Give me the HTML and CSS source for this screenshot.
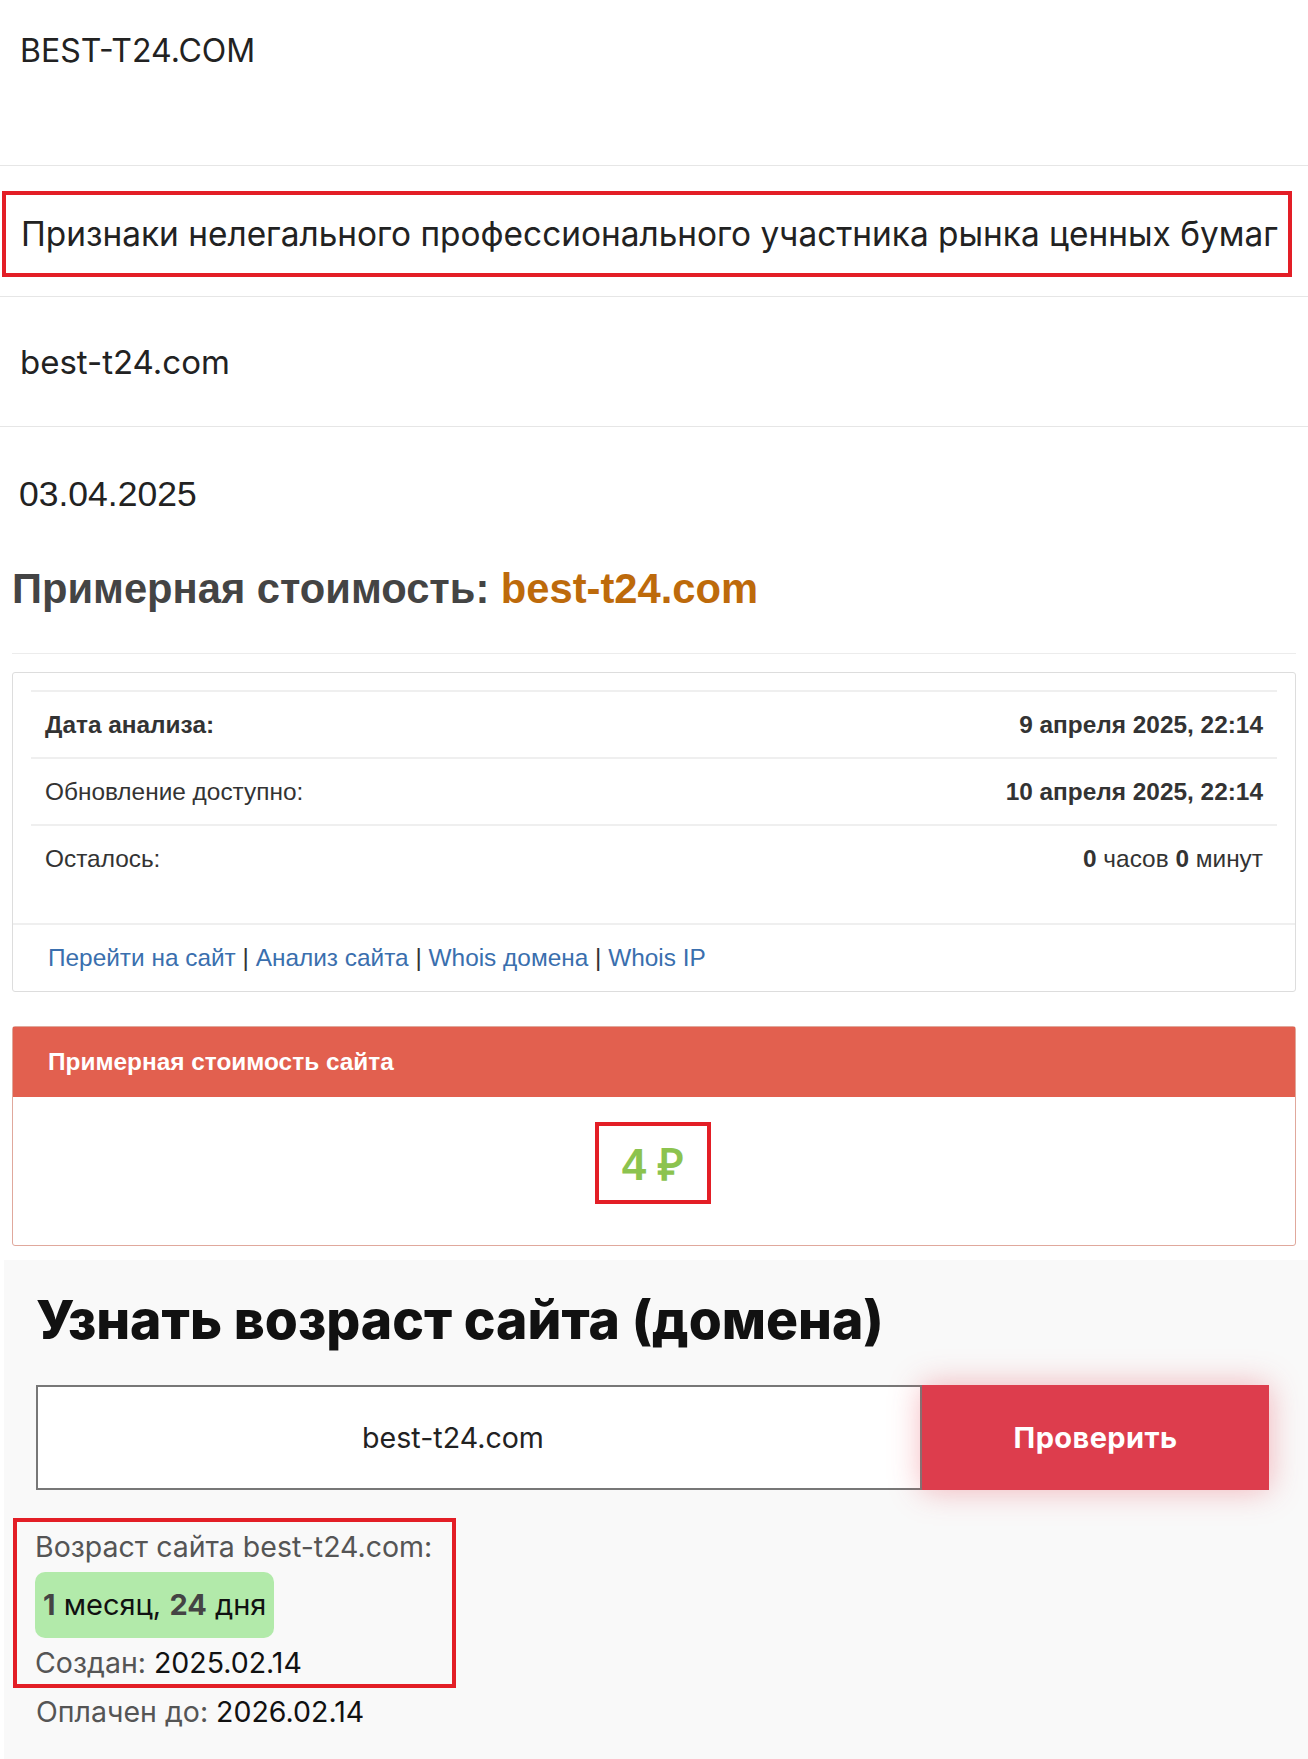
FILE: index.html
```html
<!DOCTYPE html>
<html lang="ru">
<head>
<meta charset="utf-8">
<title>best-t24.com</title>
<link rel="stylesheet" href="styles.css">
</head>
<body>
<header class="site-head">
  <div class="brand">BEST-T24.COM</div>
</header>
<div class="strip strip-title">
  <div class="mark-box title-box">Признаки нелегального профессионального участника рынка ценных бумаг</div>
</div>
<div class="strip strip-domain">best-t24.com</div>
<div class="date">03.04.2025</div>
<h2 class="cost-title">Примерная стоимость: <span class="cost-domain">best-t24.com</span></h2>
<div class="rule"></div>
<div class="panel">
  <div class="panel-body">
    <table class="info">
      <tr><td class="lbl strong">Дата анализа:</td><td class="val strong">9 апреля 2025, 22:14</td></tr>
      <tr><td class="lbl">Обновление доступно:</td><td class="val strong">10 апреля 2025, 22:14</td></tr>
      <tr><td class="lbl">Осталось:</td><td class="val"><b>0</b> часов <b>0</b> минут</td></tr>
    </table>
  </div>
  <div class="panel-foot">
    <a href="#">Перейти на сайт</a> | <a href="#">Анализ сайта</a> | <a href="#">Whois домена</a> | <a href="#">Whois IP</a>
  </div>
</div>
<div class="price-panel">
  <div class="price-head">Примерная стоимость сайта</div>
  <div class="price-body"><span class="mark-box price">4 ₽</span></div>
</div>
<section class="age">
  <h1 class="age-title">Узнать возраст сайта (домена)</h1>
  <form class="age-form" onsubmit="return false">
    <input class="age-input" type="text" value="best-t24.com">
    <button class="age-btn" type="submit">Проверить</button>
  </form>
  <div class="mark-box age-result">
    <div class="age-line">Возраст сайта best-t24.com:</div>
    <div class="age-badge"><b>1</b> месяц, <b>24</b> дня</div>
    <div class="age-line age-created">Создан: <span class="v">2025.02.14</span></div>
  </div>
  <div class="age-line age-paid">Оплачен до: <span class="v">2026.02.14</span></div>
</section>
</body>
</html>
```
FILE: styles.css
```css
* { box-sizing: border-box; }
html, body { margin: 0; padding: 0; }
body {
  background: #fff;
  font-family: "Liberation Sans", Arial, sans-serif;
  color: #333;
}
.site-head {
  height: 166px;
  border-bottom: 1px solid #e6e6e6;
  padding: 31px 0 0 20px;
}
.brand {
  font-family: Inter, "Noto Sans", sans-serif;
  font-size: 32px;
  line-height: 40px;
  color: #222;
}
.strip {
  border-bottom: 1px solid #e6e6e6;
  font-family: Inter, "Noto Sans", sans-serif;
  color: #222;
}
.strip-title {
  height: 131px;
  padding: 25px 16px 0 2px;
}
.mark-box { border: 4px solid #e31e26; }
.title-box {
  height: 86px;
  display: flex;
  align-items: center;
  padding-left: 15px;
  font-size: 33.4px;
  white-space: nowrap;
}
.strip-domain {
  height: 130px;
  display: flex;
  align-items: center;
  padding-left: 20px;
  font-size: 33px;
}
.date {
  font-size: 35.5px;
  padding: 47px 0 0 19px;
  line-height: 40px;
  color: #222;
}
.cost-title {
  margin: 50px 0 0 12px;
  font-size: 41.7px;
  line-height: 50px;
  font-weight: bold;
  color: #444;
}
.cost-domain { color: #bd6a0b; }
.rule {
  margin: 39px 12px 0 12px;
  border-top: 1px solid #ececec;
}
.panel {
  margin: 18px 12px 0 12px;
  border: 1px solid #ddd;
  border-radius: 3px;
}
.panel-body { padding: 17px 18px 31px 18px; }
.info {
  width: 100%;
  border-collapse: collapse;
  font-size: 24.4px;
  color: #333;
}
.info td {
  height: 67px;
  padding: 0 14px;
  border-top: 2px solid #efefef;
  vertical-align: middle;
}
.info .val { text-align: right; }
.info .strong { font-weight: bold; }
.panel-foot {
  border-top: 2px solid #efefef;
  height: 68px;
  display: flex;
  align-items: center;
  padding-left: 35px;
  font-size: 24.4px;
  color: #333;
  white-space: pre;
}
.panel-foot a { color: #3a6fae; text-decoration: none; }
.price-panel {
  margin: 34px 12px 0 12px;
  border: 1px solid #e0a89c;
  border-radius: 3px;
}
.price-head {
  background: #e2604f;
  color: #fff;
  height: 70px;
  display: flex;
  align-items: center;
  padding-left: 35px;
  font-size: 24.4px;
  font-weight: bold;
}
.price-body {
  height: 148px;
  display: flex;
  justify-content: center;
  padding-top: 25px;
  align-items: flex-start;
}
.price {
  width: 116px;
  height: 82px;
  display: flex;
  align-items: center;
  justify-content: center;
  color: #8cc34f;
  font-size: 44px;
  font-weight: bold;
  margin-left: -2px;
}
.age {
  background: #f9f9f9;
  margin: 14px 0 0 4px;
  padding: 28px 0 40px 0;
  font-family: Inter, "Noto Sans", sans-serif;
}
.age-title {
  margin: 0 0 0 32px;
  font-size: 53.4px;
  line-height: 64px;
  font-weight: 800;
  color: #111;
}
.age-form {
  display: flex;
  margin: 33px 0 0 32px;
  width: 1233px;
}
.age-input {
  width: 886px;
  height: 105px;
  border: 2px solid #777;
  background: #fff;
  font-family: inherit;
  font-size: 28.6px;
  text-align: center;
  padding: 0 52px 0 0;
  color: #222;
  outline: none;
}
.age-btn {
  width: 347px;
  height: 105px;
  border: 0;
  background: #dd3d4d;
  color: #fff;
  font-family: inherit;
  font-size: 29px;
  font-weight: 700;
  letter-spacing: 0.4px;
  box-shadow: 0 0 30px rgba(230, 70, 85, 0.4);
  cursor: pointer;
}
.age-result {
  width: 443px;
  margin: 28px 0 0 9px;
  padding: 7px 0 3px 18px;
}
.age-line {
  font-size: 28.5px;
  line-height: 36px;
  color: #555;
}
.age-line .v { color: #111; }
.age-badge {
  display: inline-block;
  background: #b2eaaa;
  border-radius: 10px;
  height: 66px;
  width: 239px;
  line-height: 66px;
  font-size: 29px;
  color: #111;
  padding-left: 8px;
  margin: 7px 0 0 0;
  vertical-align: top;
}
.age-badge b { color: #444; }
.age-created { margin-top: 7px; }
.age-paid { margin: 6px 0 0 32px; }
```
